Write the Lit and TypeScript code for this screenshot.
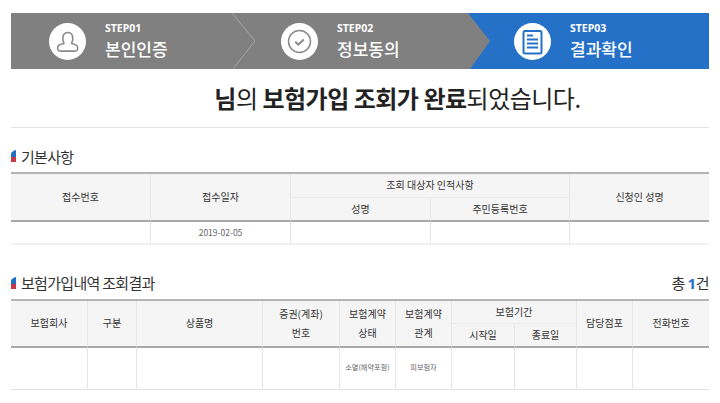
import { LitElement, html, css, svg } from "lit";
import { customElement } from "lit/decorators.js";

const marker = html`<svg class="marker" width="5" height="12" viewBox="0 0 5 12">
  <path d="M5 0V7H0V3.5Q1 1 5 0Z" fill="#1f6fc6"/><path d="M0 7H5V12H0Z" fill="#c8364a"/></svg>`;

const personIcon = svg`<g fill="none" stroke="#8a8a8a" stroke-width="1.6" stroke-linejoin="round">
  <path d="M15 20.500c-1.200-2.200-1.500-4.800-1-7 .6-2.600 2.500-4 4.800-4s4.200 1.400 4.800 4c.5 2.200.2 4.800-1 7 2.200.6 4.300 1 5.300 2.200 1 1.200 1 3.500.1 4.600-.5.6-1.200.8-2.200.8H11.500c-1 0-1.700-.2-2.200-.8-.9-1.100-.9-3.400.1-4.600 1-1.200 3.400-1.600 5.600-2.200z"/></g>`;
const checkIcon = svg`<g fill="none" stroke="#8a8a8a">
  <circle cx="18.500" cy="18.500" r="11" stroke-width="1.500"/>
  <path d="M14.300 18.800l3 2.800 5.500-5" stroke-width="2"/></g>`;
const docIcon = svg`<g fill="none" stroke="#2571c8" stroke-width="2">
  <path d="M11 8h15a1.500 1.500 0 0 1 1.500 1.500v19.500a1.500 1.500 0 0 1-1.500 1.500H11A1.500 1.500 0 0 1 9.500 29V9.500A1.500 1.500 0 0 1 11 8z"/>
  <path d="M13 12.500h6M13 16.500h11M13 20.500h11M13 24.500h11"/></g>`;

const steps = [
  { no: "STEP01", name: "본인인증", icon: personIcon, cls: "s1" },
  { no: "STEP02", name: "정보동의", icon: checkIcon, cls: "s2" },
  { no: "STEP03", name: "결과확인", icon: docIcon, cls: "s3" },
];

const cols1 = [140, 140, 140, 139, 139];
const cols2 = [77, 49, 126, 77, 56, 56, 63, 62, 56, 76];

@customElement("app-root")
export class AppRoot extends LitElement {
  static styles = css`
    :host {
      display: block;
      width: 720px;
      height: 403px;
      overflow: hidden;
      background: #fff;
      box-sizing: border-box;
      padding: 13px 11px 0;
      font-family: "Noto Sans CJK KR", "Noto Sans", sans-serif;
      color: #333;
    }
    .steps { position: relative; display: flex; height: 56px; background: #808080; color: #fff; }
    .blue { position: absolute; left: 456.5px; right: 0; top: 0; bottom: 0; background: #2571c8; }
    .chev { position: absolute; left: 221px; top: 0; }
    .tip { position: absolute; left: 456px; top: 0; }
    .step { position: relative; display: flex; align-items: center; box-sizing: border-box; padding-left: 38px; }
    .s1 { width: 232px; }
    .s2 { width: 233px; }
    .s3 { flex: 1; }
    .circle { width: 37px; height: 37px; border-radius: 50%; background: #fff; flex: none; }
    .circle svg { display: block; }
    .stext { margin-left: 19px; display: flex; flex-direction: column; padding-bottom: 1px; }
    .no { font-size: 10.5px; line-height: 15px; font-weight: 700; font-family: "Noto Sans", sans-serif; }
    .name { font-size: 17px; line-height: 25px; font-weight: 500; }
    .headline {
      height: 59px; box-sizing: border-box; border-bottom: 1px solid #e4e4e4;
      text-align: center; font-size: 24px; line-height: 57px; color: #222; letter-spacing: -0.5px; padding-left: 75px;
    }
    .headline b { font-weight: 700; }
    .sec { display: flex; align-items: center; justify-content: space-between; box-sizing: border-box; }
    .sec.a { margin-top: 14px; height: 30px; padding-bottom: 2px; }
    .sec.b { margin-top: 23px; height: 31px; padding-bottom: 2px; }
    .sec .left { display: flex; align-items: center; gap: 5px; }
    .marker { display: block; }
    .title { font-size: 15px; color: #333; letter-spacing: -0.7px; }
    .total { font-size: 15px; color: #333; letter-spacing: -0.5px; }
    .total em { font-style: normal; font-weight: 700; color: #2571c8; font-family: "Noto Sans", sans-serif; }
    table { border-collapse: separate; border-spacing: 0; table-layout: fixed; width: 698px; border-top: 2px solid #b4b4b4; }
    th, td { padding: 0; text-align: center; border-right: 1px solid #e6e6e6; box-sizing: border-box; }
    th.end, td.end { border-right: 0; }
    th { background: #f5f5f5; font-weight: 400; color: #333; font-size: 10px; line-height: 19px; border-bottom: 2px solid #a8a8a8; padding-bottom: 2px; }
    th.top { border-bottom: 1px solid #ebebeb; }
    td { font-size: 8.5px; color: #666; border-bottom: 2px solid #f0f0f0; padding-bottom: 2px; }
    .t1 tr.h1 { height: 24px; }
    .t1 tr.h2 { height: 24px; }
    .t1 tr.b { height: 23px; }
    .t2 tr.h1 { height: 23px; }
    .t2 tr.h2 { height: 24px; }
    .t2 tr.b { height: 42px; }
    .t2 td { font-size: 7.2px; border-bottom: 1px solid #e2e2e2; padding-bottom: 4px; }
  `;

  render() {
    return html`
      <div class="steps">
        <div class="blue"></div>
        <svg class="chev" width="24" height="56" viewBox="0 0 24 56"><path d="M0 0L23 28L1 56" fill="#808080" stroke="#a6a6a6" stroke-width="1"/></svg>
        <svg class="tip" width="24" height="56" viewBox="0 0 24 56"><path d="M0 0H1L23 28L3 56H0Z" fill="#808080"/></svg>
        ${steps.map(
          (s) => html`<div class="step ${s.cls}">
            <div class="circle"><svg width="37" height="37" viewBox="0 0 37 37">${s.icon}</svg></div>
            <div class="stext"><span class="no">${s.no}</span><span class="name">${s.name}</span></div>
          </div>`
        )}
      </div>
      <div class="headline"><b>님</b>의 <b>보험가입 조회가 완료</b>되었습니다.</div>

      <div class="sec a"><div class="left">${marker}<span class="title">기본사항</span></div></div>
      <table class="t1">
        <colgroup>${cols1.map((w) => html`<col style="width:${w}px" />`)}</colgroup>
        <tr class="h1">
          <th rowspan="2">접수번호</th>
          <th rowspan="2">접수일자</th>
          <th colspan="2" class="top">조회 대상자 인적사항</th>
          <th rowspan="2" class="end">신청인 성명</th>
        </tr>
        <tr class="h2"><th>성명</th><th>주민등록번호</th></tr>
        <tr class="b"><td></td><td>2019-02-05</td><td></td><td></td><td class="end"></td></tr>
      </table>

      <div class="sec b">
        <div class="left">${marker}<span class="title">보험가입내역 조회결과</span></div>
        <span class="total">총 <em>1</em>건</span>
      </div>
      <table class="t2">
        <colgroup>${cols2.map((w) => html`<col style="width:${w}px" />`)}</colgroup>
        <tr class="h1">
          <th rowspan="2">보험회사</th>
          <th rowspan="2">구분</th>
          <th rowspan="2">상품명</th>
          <th rowspan="2">증권(계좌)<br />번호</th>
          <th rowspan="2">보험계약<br />상태</th>
          <th rowspan="2">보험계약<br />관계</th>
          <th colspan="2" class="top">보험기간</th>
          <th rowspan="2">담당점포</th>
          <th rowspan="2" class="end">전화번호</th>
        </tr>
        <tr class="h2"><th>시작일</th><th>종료일</th></tr>
        <tr class="b"><td></td><td></td><td></td><td></td><td>소멸(해약포함)</td><td>피보험자</td><td></td><td></td><td></td><td class="end"></td></tr>
      </table>
    `;
  }
}
